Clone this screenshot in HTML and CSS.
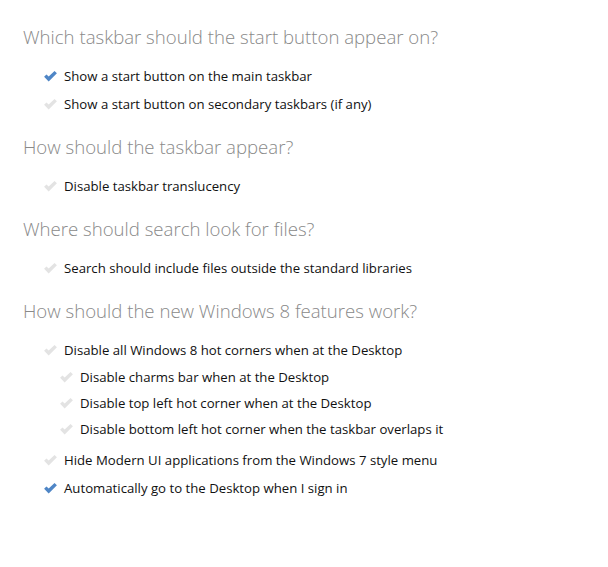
FILE: index.html
```html
<!DOCTYPE html>
<html lang="en">
<head>
    <meta charset="UTF-8">
    <title>Start menu settings</title>
    <link rel="stylesheet" href="styles.css">
</head>
<body>
    <div class="settings">
        <div class="group">
            <h2>Which taskbar should the start button appear on?</h2>
            <ul class="options">
                <li class="checked"><svg class="tick" viewBox="0 0 14 12"><path d="M0 6.2 L2.6 3.7 L5 6.1 L11.4 0 L14 2.5 L5 11.5 Z"/></svg>Show a start button on the main taskbar</li>
                <li><svg class="tick" viewBox="0 0 14 12"><path d="M0 6.2 L2.6 3.7 L5 6.1 L11.4 0 L14 2.5 L5 11.5 Z"/></svg>Show a start button on secondary taskbars (if any)</li>
            </ul>
        </div>

        <div class="group">
            <h2>How should the taskbar appear?</h2>
            <ul class="options">
                <li><svg class="tick" viewBox="0 0 14 12"><path d="M0 6.2 L2.6 3.7 L5 6.1 L11.4 0 L14 2.5 L5 11.5 Z"/></svg>Disable taskbar translucency</li>
            </ul>
        </div>

        <div class="group">
            <h2>Where should search look for files?</h2>
            <ul class="options">
                <li><svg class="tick" viewBox="0 0 14 12"><path d="M0 6.2 L2.6 3.7 L5 6.1 L11.4 0 L14 2.5 L5 11.5 Z"/></svg>Search should include files outside the standard libraries</li>
            </ul>
        </div>

        <div class="group">
            <h2>How should the new Windows 8 features work?</h2>
            <ul class="options">
                <li><svg class="tick" viewBox="0 0 14 12"><path d="M0 6.2 L2.6 3.7 L5 6.1 L11.4 0 L14 2.5 L5 11.5 Z"/></svg>Disable all Windows 8 hot corners when at the Desktop</li>
            </ul>
            <ul class="options sub">
                <li><svg class="tick" viewBox="0 0 14 12"><path d="M0 6.2 L2.6 3.7 L5 6.1 L11.4 0 L14 2.5 L5 11.5 Z"/></svg>Disable charms bar when at the Desktop</li>
                <li><svg class="tick" viewBox="0 0 14 12"><path d="M0 6.2 L2.6 3.7 L5 6.1 L11.4 0 L14 2.5 L5 11.5 Z"/></svg>Disable top left hot corner when at the Desktop</li>
                <li><svg class="tick" viewBox="0 0 14 12"><path d="M0 6.2 L2.6 3.7 L5 6.1 L11.4 0 L14 2.5 L5 11.5 Z"/></svg>Disable bottom left hot corner when the taskbar overlaps it</li>
            </ul>
            <ul class="options">
                <li><svg class="tick" viewBox="0 0 14 12"><path d="M0 6.2 L2.6 3.7 L5 6.1 L11.4 0 L14 2.5 L5 11.5 Z"/></svg>Hide Modern UI applications from the Windows 7 style menu</li>
                <li class="checked"><svg class="tick" viewBox="0 0 14 12"><path d="M0 6.2 L2.6 3.7 L5 6.1 L11.4 0 L14 2.5 L5 11.5 Z"/></svg>Automatically go to the Desktop when I sign in</li>
            </ul>
        </div>
    </div>
</body>
</html>
```

FILE: styles.css
```css
body {
    margin: 0;
    background: #ffffff;
    font-family: 'Open Sans', 'Noto Sans', sans-serif;
    color: #111111;
}

.settings {
    padding: 23px 0 0 23px;
}

.group {
    margin-bottom: 15px;
}

.group h2 {
    margin: 0 0 11px;
    font-size: 18.6px;
    font-weight: 300;
    color: #898989;
    line-height: 28px;
}

.options {
    list-style: none;
    margin: 0;
    padding: 0 0 0 21px;
}

.options li {
    display: flex;
    align-items: center;
    height: 28px;
    line-height: 28px;
    font-size: 13.2px;
}

.options.sub {
    padding-left: 37px;
    margin: 0 0 4px;
}

.options.sub li {
    height: 26px;
    line-height: 26px;
}

.tick {
    width: 13px;
    height: 11px;
    margin-right: 7px;
    fill: #e3e3e3;
}

.checked .tick {
    fill: #4f86c6;
}
```
